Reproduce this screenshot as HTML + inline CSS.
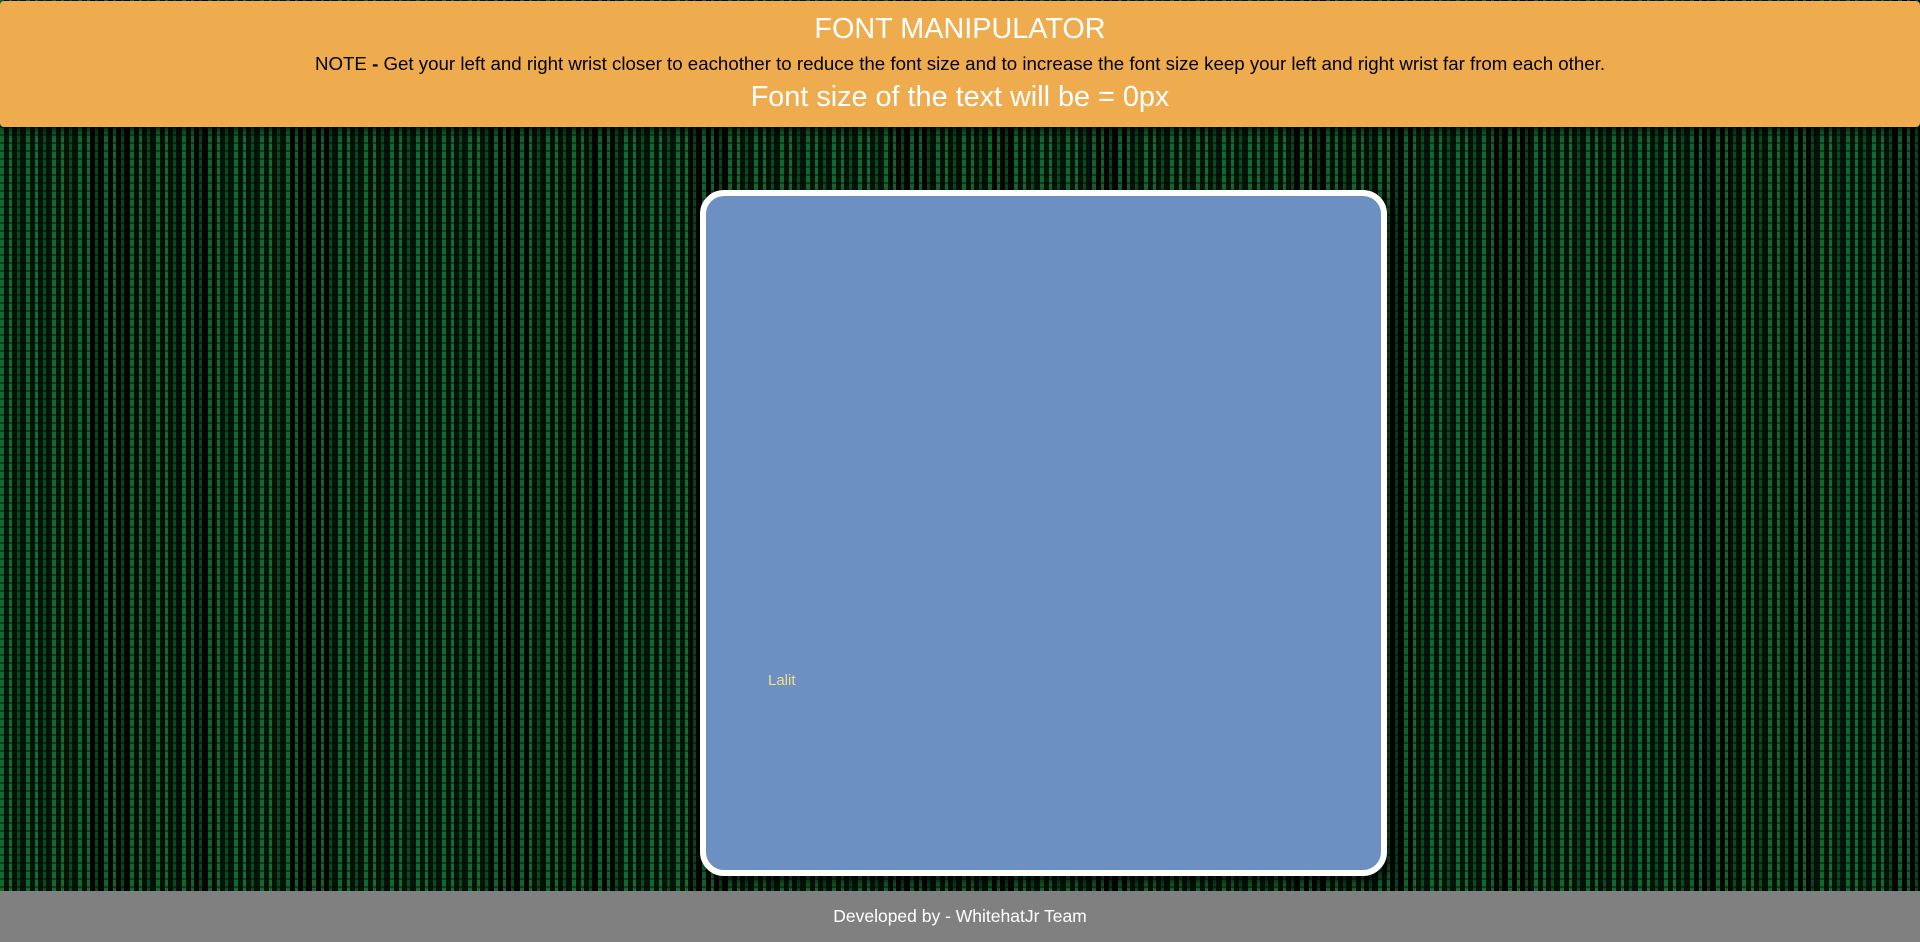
<!DOCTYPE html>
<html><head><meta charset="utf-8"><style>
html,body{margin:0;padding:0;width:1920px;height:942px;overflow:hidden;font-family:"Liberation Sans",Arial,sans-serif;}
body{position:relative;background:#020805;}
.bg{position:absolute;left:0;top:0;width:1920px;height:942px;
background:
repeating-linear-gradient(0deg,rgba(0,0,0,0) 0 6px,rgba(0,0,0,.4) 6px 8px),
repeating-linear-gradient(90deg,rgba(30,160,70,.6) 0 4px,rgba(0,0,0,0) 4px 9px,rgba(40,190,90,.5) 9px 12px,rgba(0,0,0,0) 12px 17px,rgba(15,120,50,.55) 17px 20px,rgba(0,0,0,0) 20px 26px),
repeating-linear-gradient(90deg,rgba(0,0,0,.0) 0 90px,rgba(0,0,0,.75) 90px 130px,rgba(0,0,0,.2) 130px 190px,rgba(0,0,0,.7) 190px 215px,rgba(0,0,0,0) 215px 290px,rgba(0,0,0,.8) 290px 330px,rgba(0,0,0,.1) 330px 400px),
#03150a;}
.hdr{position:absolute;left:0;top:1px;width:1920px;height:126px;background:#efac4f;border-radius:4px;box-shadow:0 4px 8px rgba(0,0,0,.7);text-align:center;}
.t1{position:absolute;top:12px;width:100%;font-size:28.8px;color:#fff;}
.t2{position:absolute;top:52px;width:100%;font-size:18.7px;color:#000;}
.t3{position:absolute;top:80px;width:100%;font-size:28.8px;color:#fff;}
.box{position:absolute;left:700px;top:190px;width:675px;height:674px;background:#6d90c3;border:6px solid #fff;border-radius:24px;box-shadow:6px 6px 12px rgba(0,0,0,.7);}
.lalit{position:absolute;left:62px;top:476px;font-size:15px;color:#f3de87;}
.ftr{position:absolute;left:0;top:891px;width:1920px;height:51px;background:#808080;color:#fff;text-align:center;font-size:17.5px;line-height:51px;}
</style></head><body>
<div class="bg"></div>
<div class="hdr">
<div class="t1">FONT MANIPULATOR</div>
<div class="t2">NOTE <b>-</b> Get your left and right wrist closer to eachother to reduce the font size and to increase the font size keep your left and right wrist far from each other.</div>
<div class="t3">Font size of the text will be = 0px</div>
</div>
<div class="box"><div class="lalit">Lalit</div></div>
<div class="ftr">Developed by - WhitehatJr Team</div>
</body></html>
